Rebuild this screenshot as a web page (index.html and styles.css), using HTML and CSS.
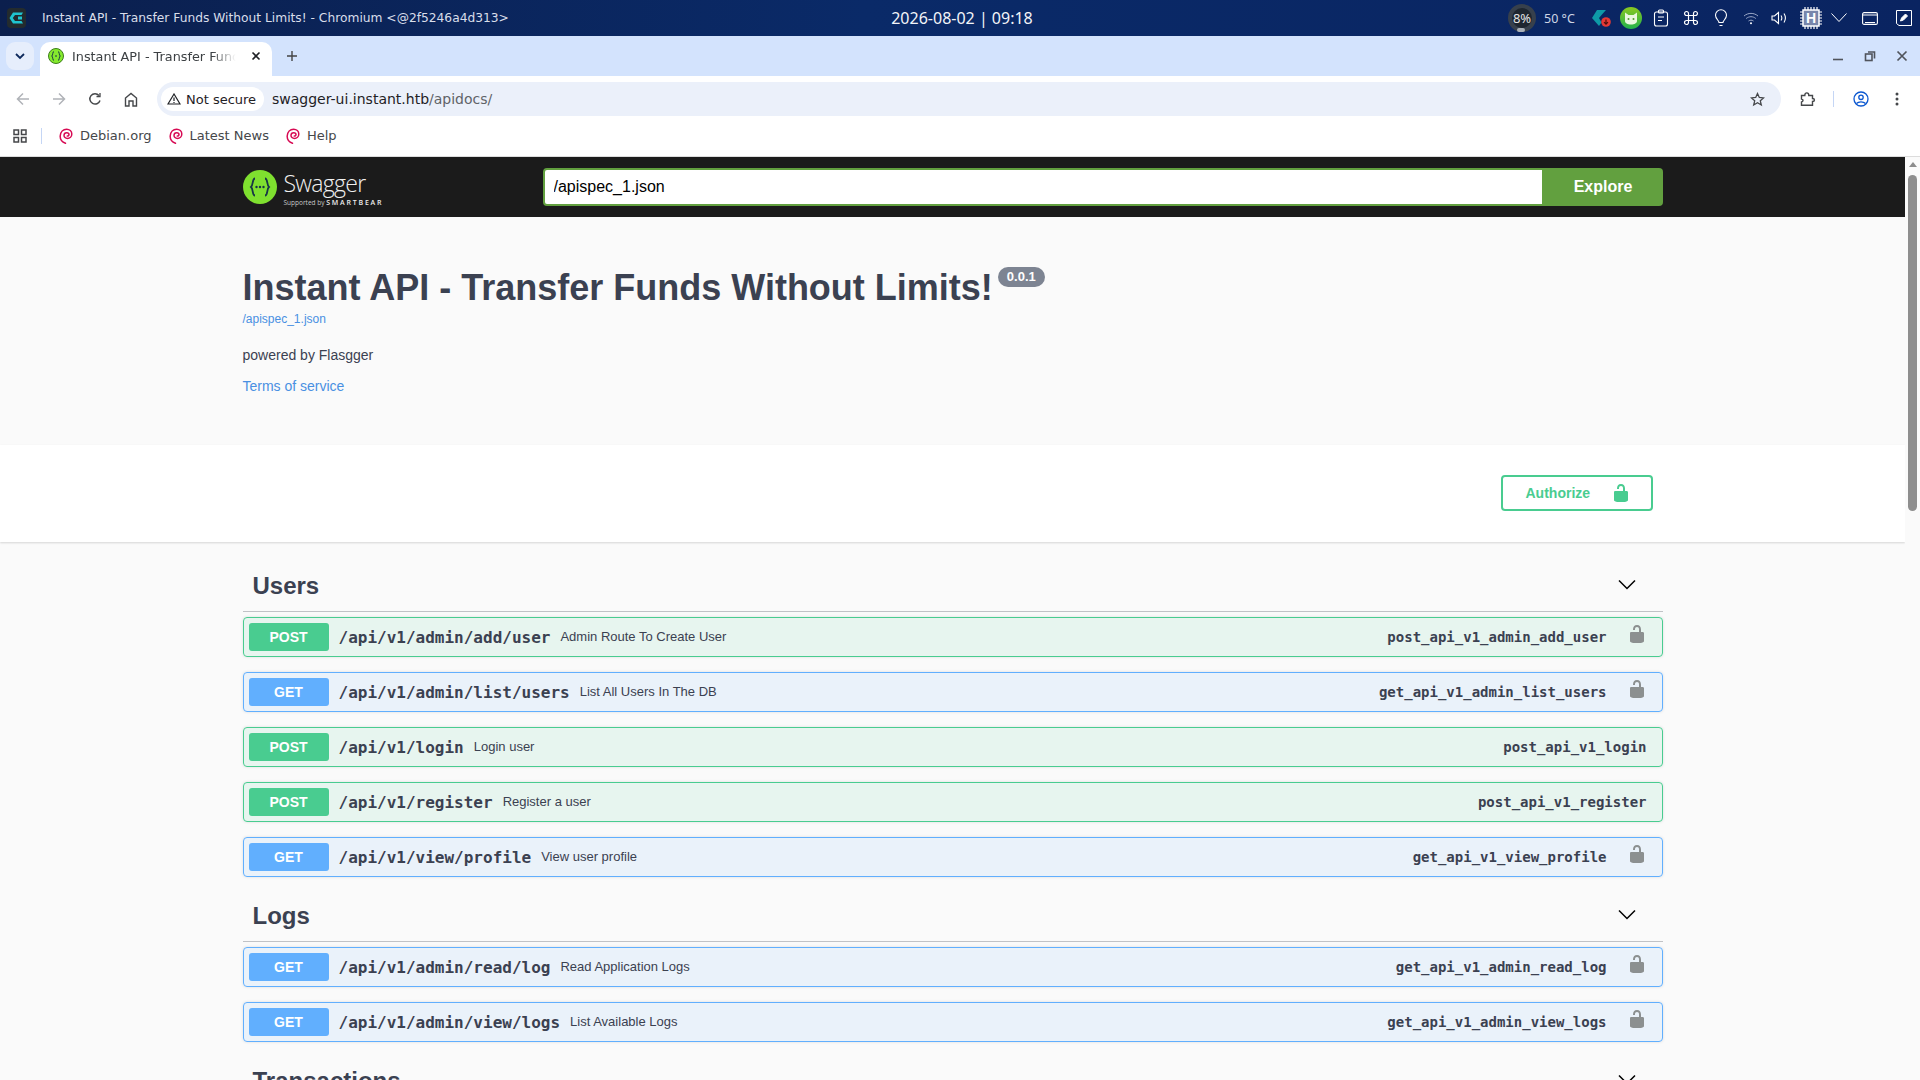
FILE: index.html
```html
<!DOCTYPE html>
<html lang="en">
<head>
    <meta charset="UTF-8">
    <title>Instant API - Transfer Funds Without Limits!</title>
    <link rel="stylesheet" href="styles.css">
</head>
<body>
    <svg class="defs" width="0" height="0">
        <symbol id="lock" viewBox="0 0 20 20"><path d="M15.8 8H14V5.6C14 2.703 12.665 1 10 1 7.334 1 6 2.703 6 5.6V6h2v-.801C8 3.754 8.797 3 10 3c1.203 0 2 .754 2 2.199V8H4c-.553 0-1 .646-1 1.199V17c0 .549.428 1.139.951 1.307l1.197.387C5.672 18.861 6.55 19 7.1 19h5.8c.549 0 1.428-.139 1.951-.307l1.196-.387c.524-.167.953-.757.953-1.306V9.199C17 8.646 16.352 8 15.8 8z"/></symbol>
        <symbol id="swirl" viewBox="0 0 14 16"><path d="M6.500 15.300C3 14 1 11.500 1.200 8 1.500 4 4.200 1.200 7.600 1.200c3 0 5.200 2 5.200 4.700 0 2.700-2.100 4.500-4.400 4.500-1.900 0-3.400-1.300-3.400-3 0-1.600 1.200-2.700 2.700-2.700 1.300 0 2.300.8 2.300 1.900 0 1-.8 1.600-1.700 1.500" fill="none" stroke="#d70a53" stroke-width="1.500" stroke-linecap="round"/></symbol>
        <symbol id="chevron" viewBox="0 0 20 20"><path d="M2 5.500l8 8 8-8" fill="none" stroke="#000" stroke-width="1.500"/></symbol>
    </svg>

    <div class="desktop">
        <!-- system panel -->
        <div class="panel">
            <div class="panel-left">
                <svg class="app-logo" width="19" height="20" viewBox="0 0 19 20">
                    <rect width="19" height="20" rx="4" fill="#232b2e"/>
                    <path d="M6 4.500h10l-1.500 2.500H8L5.800 10 8 13h6.500l1.500 2.500H6L2.500 10z" fill="#1fc4cf"/>
                    <rect x="11" y="8.500" width="4" height="3" fill="#1fc4cf"/>
                </svg>
                <span class="panel-title">Instant API - Transfer Funds Without Limits! - Chromium &lt;@2f5246a4d313&gt;</span>
            </div>
            <div class="panel-clock">2026-08-02 | 09:18</div>
            <div class="tray">
                <span class="cpu-ring">8%</span>
                <span class="temp">50 °C</span>
                <svg class="t-down" width="20" height="20" viewBox="0 0 20 20">
                    <path d="M6 2h9l-4.500 5L8 10l2.500 4.500L8 18 1 10z" fill="#0e9aa7"/>
                    <circle cx="15" cy="14" r="4.800" fill="#e53935"/>
                    <path d="M15 11.500v4.500M13 14.200l2 2 2-2" stroke="#4a0d0d" stroke-width="1.200" fill="none"/>
                </svg>
                <svg class="t-cat" width="22" height="22" viewBox="0 0 22 22">
                    <defs><linearGradient id="catfill" x1="0" y1="0" x2="0" y2="1"><stop offset="0" stop-color="#8bc820"/><stop offset="1" stop-color="#22b24c"/></linearGradient></defs>
                    <circle cx="11" cy="11" r="11" fill="url(#catfill)"/>
                    <path d="M5 5.500l3.500 2.500h5L17 5.500v8.500c0 2-2.500 3.500-6 3.500S5 16 5 14z" fill="#eaf7df"/>
                    <circle cx="8.500" cy="12" r="1" fill="#4f9a2a"/><circle cx="13.500" cy="12" r="1" fill="#4f9a2a"/>
                </svg>
                <svg class="t-clip" width="16" height="18" viewBox="0 0 16 18" fill="none" stroke="#fff" stroke-width="1.100">
                    <rect x="1.500" y="3" width="13" height="14" rx="2"/><rect x="5.500" y="1" width="5" height="3" rx="1"/><path d="M5 8h6M5 11.500h4"/>
                </svg>
                <svg class="t-cmd" width="16" height="16" viewBox="0 0 16 16" fill="none" stroke="#fff" stroke-width="1.200">
                    <path d="M5.500 5.500h5v5h-5zM5.500 5.500H3.700a2 2 0 1 1 1.800-1.800zM10.500 5.500V3.700a2 2 0 1 1 1.800 1.800zM10.500 10.500h1.800a2 2 0 1 1-1.800 1.800zM5.500 10.500v1.800a2 2 0 1 1-1.800-1.800z"/>
                </svg>
                <svg class="t-bulb" width="14" height="18" viewBox="0 0 14 18" fill="none" stroke="#fff" stroke-width="1.100">
                    <path d="M5 13.500c0-2-3.500-3.500-3.500-7.200a5.500 5.500 0 0 1 11 0c0 3.700-3.500 5.200-3.500 7.200zM5.500 16.500h3"/>
                </svg>
                <svg class="t-wifi" width="16" height="14" viewBox="0 0 16 14" fill="none" stroke="#9aa8c8" stroke-width="1">
                    <path d="M1 5c4-3.500 10-3.500 14 0M3.200 7.500c3-2.400 6.600-2.400 9.600 0M5.500 10c1.500-1.100 3.500-1.100 5 0"/><circle cx="8" cy="12.300" r="1" fill="#fff" stroke="none"/>
                </svg>
                <svg class="t-vol" width="16" height="14" viewBox="0 0 16 14" fill="none" stroke="#fff" stroke-width="1.100">
                    <path d="M1 5v4h2.500L7.500 12.500v-11L3.500 5zM10 4.500c1 1.500 1 3.500 0 5M13 2.500c1.700 2.700 1.700 6.300 0 9"/>
                </svg>
                <svg class="t-chip" width="22" height="22" viewBox="0 0 22 22">
                    <path d="M5 0v22M8 0v22M11 0v22M14 0v22M17 0v22M0 5h22M0 8h22M0 11h22M0 14h22M0 17h22" stroke="#fff" stroke-width="1.200"/>
                    <rect x="3" y="3" width="16" height="16" fill="#7886ab" stroke="#fff" stroke-width="1.500"/>
                    <text x="11" y="16" class="cpu-letter">H</text>
                </svg>
                <svg class="t-chev" width="16" height="10" viewBox="0 0 16 10" fill="none" stroke="#fff" stroke-width="1"><path d="M.500 .500L8 8.500 15.500 .500"/></svg>
                <svg class="t-win" width="16" height="13" viewBox="0 0 16 13" fill="none" stroke="#fff" stroke-width="1.100"><rect x=".600" y=".600" width="14.800" height="11.800" rx="1.500"/><path d="M.600 3h14.800M3 10.500h10"/></svg>
                <svg class="t-note" width="16" height="16" viewBox="0 0 16 16" fill="none" stroke="#fff" stroke-width="1"><path d="M.500 .500h15v15H3l-2.500-2z"/><path d="M4.500 11l1-3 4-4 2 2-4 4z" fill="#fff"/></svg>
            </div>
        </div>

        <!-- browser chrome -->
        <div class="tabstrip">
            <div class="tab-search">
                <svg width="10" height="7" viewBox="0 0 10 7" fill="none" stroke="#0e2a5c" stroke-width="1.800"><path d="M1 1l4 4 4-4"/></svg>
            </div>
            <div class="tab">
                <span class="favicon"><svg width="16" height="16" viewBox="0 0 16 16"><circle cx="8" cy="8" r="7.500" fill="#85ea2d" stroke="#3c7d1b"/><path d="M6 3.500C4.500 3.500 5 7 3.800 8 5 9 4.500 12.500 6 12.500M10 3.500c1.500 0 1 3.500 2.200 4.500-1.200 1-.7 4.500-2.200 4.500M7 8h2" fill="none" stroke="#173647"/></svg></span>
                <span class="tab-title">Instant API - Transfer Funds Without Limits!</span>
                <svg class="tab-close" width="10" height="10" viewBox="0 0 10 10" stroke="#1f2125" stroke-width="1.600"><path d="M1.500 1.500l7 7M8.500 1.500l-7 7"/></svg>
            </div>
            <svg class="tab-new" width="12" height="12" viewBox="0 0 12 12" stroke="#444" stroke-width="1.400"><path d="M6 1v10M1 6h10"/></svg>
            <div class="window-controls">
                <svg width="12" height="12" viewBox="0 0 12 12" stroke="#50545c" stroke-width="1.600"><path d="M1 9.500h10"/></svg>
                <svg width="12" height="12" viewBox="0 0 12 12" fill="none" stroke="#50545c" stroke-width="1.600"><rect x="1.500" y="4" width="6.500" height="6.500"/><path d="M4 2h6.500v6.500"/></svg>
                <svg width="12" height="12" viewBox="0 0 12 12" stroke="#50545c" stroke-width="1.700"><path d="M1.500 1.500l9 9M10.500 1.500l-9 9"/></svg>
            </div>
        </div>

        <div class="toolbar">
            <svg class="nav-icon" width="14" height="14" viewBox="0 0 14 14" fill="none" stroke="#b0b3b8" stroke-width="1.500"><path d="M13 7H2M7 1.500L1.500 7 7 12.500"/></svg>
            <svg class="nav-icon" width="14" height="14" viewBox="0 0 14 14" fill="none" stroke="#b0b3b8" stroke-width="1.500"><path d="M1 7h11M7 1.500L12.500 7 7 12.500"/></svg>
            <svg class="nav-icon" width="14" height="14" viewBox="0 0 14 14" fill="none" stroke="#45474a" stroke-width="1.500"><path d="M12 8.500A5.200 5.200 0 1 1 11 3.500"/><path d="M12 1v3.500H8.500" stroke-width="1.300"/></svg>
            <svg class="nav-icon" width="14" height="15" viewBox="0 0 14 15" fill="none" stroke="#45474a" stroke-width="1.400"><path d="M1.500 14V6L7 1.500 12.500 6v8H9V9H5v5z"/></svg>
            <div class="omnibox">
                <div class="chip">
                    <svg width="14" height="12" viewBox="0 0 14 12" fill="none" stroke="#1f2125" stroke-width="1.200"><path d="M7 1L1 11h12zM7 4.500v3.500M7 9v1"/></svg>
                    <span>Not secure</span>
                </div>
                <div class="url">swagger-ui.instant.htb<span class="url-path">/apidocs/</span></div>
                <svg class="star" width="15" height="15" viewBox="0 0 15 15" fill="none" stroke="#45474a" stroke-width="1.300"><path d="M7.500 1.500l1.800 4 4.300.4-3.300 2.900 1 4.200-3.800-2.300-3.800 2.300 1-4.200L1.400 5.900l4.300-.4z"/></svg>
            </div>
            <svg class="ext" width="16" height="16" viewBox="0 0 16 16" fill="none" stroke="#45474a" stroke-width="1.400"><path d="M1.500 4.500h3.300C4.800 1 8.800 1 8.800 4.500h3.700v3c2.600 0 2.600 3 0 3v3.800h-11v-3.300c2-.6 2-2.400 0-3z"/></svg>
            <span class="tool-sep"></span>
            <svg class="profile" width="16" height="16" viewBox="0 0 16 16" fill="none" stroke="#0b57d0" stroke-width="1.300"><circle cx="8" cy="8" r="7"/><circle cx="8" cy="6.300" r="2.200"/><path d="M3.500 12.500c2-2.300 7-2.300 9 0"/></svg>
            <svg class="menu" width="4" height="14" viewBox="0 0 4 14" fill="#45474a"><circle cx="2" cy="2" r="1.500"/><circle cx="2" cy="7" r="1.500"/><circle cx="2" cy="12" r="1.500"/></svg>
        </div>

        <div class="bookmarks">
            <svg width="14" height="14" viewBox="0 0 14 14" fill="none" stroke="#45474a" stroke-width="1.500"><rect x="1" y="1" width="4.500" height="4.500"/><rect x="8.500" y="1" width="4.500" height="4.500"/><rect x="1" y="8.500" width="4.500" height="4.500"/><rect x="8.500" y="8.500" width="4.500" height="4.500"/></svg>
            <span class="bm-sep"></span>
            <a class="bm"><svg width="14" height="16"><use href="#swirl"/></svg>Debian.org</a>
            <a class="bm"><svg width="14" height="16"><use href="#swirl"/></svg>Latest News</a>
            <a class="bm"><svg width="14" height="16"><use href="#swirl"/></svg>Help</a>
        </div>

        <!-- page -->
        <div class="page">
            <div class="main">
                <div class="topbar">
                    <div class="wrap topbar-inner">
                        <div class="brand">
                            <svg width="34" height="34" viewBox="0 0 34 34">
                                <circle cx="17" cy="17" r="17" fill="#7fe02f"/>
                                <path d="M12 8.500c-3 0-1.500 6.500-4 8.500 2.500 2 1 8.500 4 8.500M22 8.500c3 0 1.500 6.500 4 8.500-2.500 2-1 8.500-4 8.500" fill="none" stroke="#173647" stroke-width="1.800"/>
                                <circle cx="13.500" cy="17" r="1.200" fill="#173647"/><circle cx="17" cy="17" r="1.200" fill="#173647"/><circle cx="20.500" cy="17" r="1.200" fill="#173647"/>
                            </svg>
                            <div class="brand-text">
                                <span class="brand-name">Swagger</span>
                                <span class="brand-sub">Supported by <b>SMARTBEAR</b></span>
                            </div>
                        </div>
                        <div class="explore">
                            <input class="explore-input" type="text" value="/apispec_1.json">
                            <button class="explore-btn">Explore</button>
                        </div>
                    </div>
                </div>

                <div class="info">
                    <div class="wrap">
                        <div class="title-row">
                            <h2 class="title">Instant API - Transfer Funds Without Limits!</h2>
                            <span class="version">0.0.1</span>
                        </div>
                        <a class="spec-link">/apispec_1.json</a>
                        <p class="desc">powered by Flasgger</p>
                        <a class="terms">Terms of service</a>
                    </div>
                </div>

                <div class="schemes">
                    <div class="wrap schemes-inner">
                        <button class="authorize">Authorize <svg width="20" height="20"><use href="#lock"/></svg></button>
                    </div>
                </div>

                <div class="wrap ops">
                    <div class="tag"><h3>Users</h3><svg width="20" height="20"><use href="#chevron"/></svg></div>
                    <div class="op post">
                        <span class="method">POST</span><span class="path">/api/v1/admin/add/user</span><span class="summary">Admin Route To Create User</span>
                        <span class="opid">post_api_v1_admin_add_user</span><svg class="op-lock" width="20" height="20"><use href="#lock"/></svg>
                    </div>
                    <div class="op get">
                        <span class="method">GET</span><span class="path">/api/v1/admin/list/users</span><span class="summary">List All Users In The DB</span>
                        <span class="opid">get_api_v1_admin_list_users</span><svg class="op-lock" width="20" height="20"><use href="#lock"/></svg>
                    </div>
                    <div class="op post">
                        <span class="method">POST</span><span class="path">/api/v1/login</span><span class="summary">Login user</span>
                        <span class="opid no-lock">post_api_v1_login</span>
                    </div>
                    <div class="op post">
                        <span class="method">POST</span><span class="path">/api/v1/register</span><span class="summary">Register a user</span>
                        <span class="opid no-lock">post_api_v1_register</span>
                    </div>
                    <div class="op get">
                        <span class="method">GET</span><span class="path">/api/v1/view/profile</span><span class="summary">View user profile</span>
                        <span class="opid">get_api_v1_view_profile</span><svg class="op-lock" width="20" height="20"><use href="#lock"/></svg>
                    </div>

                    <div class="tag"><h3>Logs</h3><svg width="20" height="20"><use href="#chevron"/></svg></div>
                    <div class="op get">
                        <span class="method">GET</span><span class="path">/api/v1/admin/read/log</span><span class="summary">Read Application Logs</span>
                        <span class="opid">get_api_v1_admin_read_log</span><svg class="op-lock" width="20" height="20"><use href="#lock"/></svg>
                    </div>
                    <div class="op get">
                        <span class="method">GET</span><span class="path">/api/v1/admin/view/logs</span><span class="summary">List Available Logs</span>
                        <span class="opid">get_api_v1_admin_view_logs</span><svg class="op-lock" width="20" height="20"><use href="#lock"/></svg>
                    </div>

                    <div class="tag"><h3>Transactions</h3><svg width="20" height="20"><use href="#chevron"/></svg></div>
                </div>
            </div>
            <div class="scrollbar">
                <span class="scroll-up"></span>
                <span class="scroll-thumb"></span>
            </div>
        </div>
    </div>
</body>
</html>
```

FILE: styles.css
```css
* {
    box-sizing: border-box;
}

html, body {
    margin: 0;
    padding: 0;
    overflow: hidden;
}

body {
    font-family: "Liberation Sans", Arial, sans-serif;
    color: #3b4151;
}

.defs {
    display: block;
    height: 0;
}

.desktop {
    width: 1920px;
    height: 1080px;
    display: flex;
    flex-direction: column;
    overflow: hidden;
}

/* system panel */
.panel {
    height: 36px;
    flex: none;
    display: grid;
    grid-template-columns: 1fr auto 1fr;
    align-items: center;
    background: linear-gradient(90deg, #0b1f4d 0%, #0a2a68 45%, #0a2461 100%);
    color: #e6eaf3;
}

.panel-left {
    display: flex;
    align-items: center;
    padding-left: 7px;
}

.panel-title {
    margin-left: 16px;
    font-family: "DejaVu Sans", sans-serif;
    font-size: 12.25px;
    white-space: nowrap;
    color: #d9deea;
}

.panel-clock {
    font-family: "Noto Sans", sans-serif;
    font-size: 16px;
    color: #f2f4f8;
    transform: translateX(2px);
}

.tray {
    display: flex;
    align-items: center;
    justify-content: flex-end;
    padding-right: 8px;
}

.cpu-ring {
    position: relative;
    width: 28px;
    height: 28px;
    border-radius: 50%;
    border: 4px solid #37404c;
    background: #1e2630;
    display: flex;
    align-items: center;
    justify-content: center;
    font-family: "Noto Sans", sans-serif;
    font-size: 13px;
    white-space: nowrap;
    color: #e4e4e4;
}

.cpu-ring::after {
    content: "";
    position: absolute;
    left: 5px;
    bottom: -4px;
    width: 8px;
    height: 4px;
    border-radius: 2px;
    background: #a9b0b8;
}

.temp {
    margin-left: 8px;
    font-family: "Noto Sans", sans-serif;
    font-size: 12.5px;
    color: #cfd6e6;
    width: 46px;
}

.t-down { margin-left: 1px; }
.t-cat { margin-left: 9px; }
.t-clip { margin-left: 11px; }
.t-cmd { margin-left: 14px; }
.t-bulb { margin-left: 15px; }
.t-wifi { margin-left: 15px; }
.t-vol { margin-left: 12px; }
.t-chip { margin-left: 13px; }
.t-chev { margin-left: 9px; }
.t-win { margin-left: 15px; }
.t-note { margin-left: 18px; }

.cpu-letter {
    fill: #fff;
    font-family: "Liberation Sans", sans-serif;
    font-size: 14px;
    font-weight: bold;
    text-anchor: middle;
}

/* tabs */
.tabstrip {
    height: 40px;
    flex: none;
    display: flex;
    align-items: flex-end;
    background: #d3e3fd;
    padding-left: 6px;
    font-family: "DejaVu Sans", sans-serif;
}

.tab-search {
    width: 28px;
    height: 28px;
    margin-bottom: 6px;
    border-radius: 9px;
    background: #e6eefc;
    display: flex;
    align-items: center;
    justify-content: center;
}

.tab {
    width: 232px;
    height: 34px;
    margin-left: 6px;
    padding: 0 11px 6px 8px;
    background: #fff;
    border-radius: 10px 10px 0 0;
    display: flex;
    align-items: center;
    font-size: 12.8px;
    color: #3c4043;
}

.favicon {
    display: flex;
    margin-right: 8px;
}

.tab-title {
    flex: 1;
    overflow: hidden;
    white-space: nowrap;
    -webkit-mask-image: linear-gradient(90deg, #000 84%, transparent 98%);
    mask-image: linear-gradient(90deg, #000 84%, transparent 98%);
}

.tab-close {
    margin-left: 12px;
}

.tab-new {
    margin: 0 0 14px 14px;
}

.window-controls {
    margin-left: auto;
    margin-bottom: 14px;
    padding-right: 12px;
    display: flex;
    gap: 20px;
}

/* toolbar */
.toolbar {
    height: 46px;
    flex: none;
    display: flex;
    align-items: flex-start;
    padding: 6px 0 0 16px;
    background: #fff;
    border-radius: 10px 10px 0 0;
    font-family: "DejaVu Sans", sans-serif;
}

.nav-icon {
    margin: 10px 22px 0 0;
}

.omnibox {
    width: 1624px;
    height: 34px;
    margin-left: -3px;
    padding: 0 16px 0 4px;
    border-radius: 17px;
    background: #ebf0fa;
    display: flex;
    align-items: center;
}

.chip {
    width: 103px;
    height: 24px;
    border-radius: 12px;
    background: #fff;
    display: flex;
    align-items: center;
    gap: 5px;
    padding-left: 6px;
    font-size: 13px;
    white-space: nowrap;
    color: #1f2125;
}

.url {
    margin-left: 8px;
    font-size: 14px;
    color: #1f2125;
}

.url-path {
    color: #5f6368;
}

.star {
    margin-left: auto;
}

.ext {
    margin: 9px 0 0 19px;
}

.tool-sep {
    width: 1px;
    height: 16px;
    margin: 9px 0 0 17px;
    background: #c5d6f5;
}

.profile {
    margin: 9px 0 0 19px;
}

.menu {
    margin: 10px 0 0 26px;
}

/* bookmarks */
.bookmarks {
    height: 35px;
    flex: none;
    padding: 0 0 7px 13px;
    display: flex;
    align-items: center;
    background: #fff;
    border-bottom: 1px solid #dcdcdc;
    font-family: "DejaVu Sans", sans-serif;
    font-size: 13px;
    color: #45474a;
}

.bm-sep {
    width: 1px;
    height: 16px;
    margin: 0 17px 0 14px;
    background: #c5d6f5;
}

.bm {
    display: flex;
    align-items: center;
    gap: 7px;
    margin-right: 17px;
    white-space: nowrap;
}

/* page */
.page {
    flex: 1;
    min-height: 0;
    display: flex;
    background: #fafafa;
}

.main {
    flex: 1;
    min-width: 0;
    overflow: hidden;
}

.wrap {
    width: 1420px;
    margin: 0 auto;
}

.scrollbar {
    width: 15px;
    flex: none;
    padding-top: 5px;
    display: flex;
    flex-direction: column;
    align-items: center;
    background: #fafafa;
}

.scroll-up {
    width: 0;
    height: 0;
    border-left: 4.5px solid transparent;
    border-right: 4.5px solid transparent;
    border-bottom: 5px solid #8c8c8c;
}

.scroll-thumb {
    width: 9px;
    height: 336px;
    margin-top: 8px;
    border-radius: 5px;
    background: #8e8e8e;
}

.topbar {
    height: 60px;
    background: #1b1b1b;
}

.topbar-inner {
    height: 60px;
    display: flex;
    align-items: center;
    justify-content: space-between;
}

.brand {
    display: flex;
    align-items: center;
    gap: 7px;
    color: #f0f0f0;
}

.brand-text {
    display: flex;
    flex-direction: column;
    padding-top: 3px;
}

.brand-name {
    font-family: "Open Sans", sans-serif;
    font-size: 23px;
    font-weight: 300;
    line-height: 27px;
    letter-spacing: -.7px;
}

.brand-sub {
    margin-top: 1px;
    font-family: "Open Sans", sans-serif;
    font-size: 6.5px;
    line-height: 10px;
    white-space: nowrap;
    color: #c8c8c8;
}

.brand-sub b {
    font-size: 7px;
    font-weight: 600;
    letter-spacing: 1.800px;
    color: #ededed;
}

.explore {
    width: 1120px;
    height: 38px;
    display: flex;
}

.explore-input {
    flex: 1;
    min-width: 0;
    height: 38px;
    padding: 0 9px;
    border: 2px solid #62a03f;
    border-radius: 4px 0 0 4px;
    background: #fff;
    font-family: "Liberation Sans", sans-serif;
    font-size: 16px;
    color: #000;
}

.explore-btn {
    width: 119px;
    height: 38px;
    border: none;
    border-radius: 0 4px 4px 0;
    background: #62a03f;
    color: #fff;
    font-family: "Liberation Sans", sans-serif;
    font-size: 16px;
    font-weight: bold;
}

/* api info */
.info {
    height: 228px;
    padding-top: 48px;
    background: #fafafa;
}

.title-row {
    display: flex;
    align-items: flex-start;
}

.title {
    margin: 0;
    padding-top: 1px;
    font-size: 36px;
    line-height: 44px;
    font-weight: bold;
    color: #3b4151;
}

.version {
    margin: 2px 0 0 5px;
    padding: 0 9px;
    height: 20px;
    line-height: 20px;
    border-radius: 10px;
    background: #7d8492;
    color: #fff;
    font-size: 13px;
    font-weight: bold;
}

.spec-link {
    display: block;
    margin-top: 1px;
    font-size: 12px;
    line-height: 16px;
    color: #4990e2;
}

.desc {
    margin: 19px 0 0;
    font-size: 14px;
    line-height: 18px;
}

.terms {
    display: block;
    margin-top: 13px;
    font-size: 14px;
    line-height: 18px;
    color: #4990e2;
}

/* authorize */
.schemes {
    height: 97px;
    padding-top: 30px;
    background: #fff;
    box-shadow: 0 1px 2px 0 rgba(0, 0, 0, .15);
}

.schemes-inner {
    display: flex;
    justify-content: flex-end;
    padding-right: 10px;
}

.authorize {
    width: 152px;
    height: 36px;
    display: flex;
    align-items: center;
    justify-content: space-between;
    padding: 0 20px 0 23px;
    border: 2px solid #49cc90;
    border-radius: 4px;
    background: transparent;
    color: #49cc90;
    font-family: "Liberation Sans", sans-serif;
    font-size: 14px;
    font-weight: bold;
}

.authorize svg {
    fill: #49cc90;
}

/* operations */
.ops {
    padding-top: 20px;
}

.tag {
    height: 50px;
    margin-bottom: 5px;
    padding: 0 26px 0 10px;
    display: flex;
    align-items: center;
    justify-content: space-between;
    border-bottom: 1px solid rgba(59, 65, 81, .3);
}

.tag h3 {
    margin: 0 0 2px;
    font-size: 24px;
    font-weight: bold;
    color: #3b4151;
}

.tag svg {
    margin-bottom: 4px;
}

.op {
    height: 40px;
    margin-bottom: 15px;
    padding: 0 5px;
    display: flex;
    align-items: center;
    border: 1px solid;
    border-radius: 4px;
    box-shadow: 0 0 3px rgba(0, 0, 0, .12);
}

.op.post {
    border-color: #49cc90;
    background: rgba(73, 204, 144, .1);
}

.op.get {
    border-color: #61affe;
    background: rgba(97, 175, 254, .1);
}

.method {
    width: 80px;
    height: 28px;
    line-height: 28px;
    flex: none;
    border-radius: 3px;
    text-align: center;
    color: #fff;
    font-size: 14px;
    font-weight: bold;
}

.post .method {
    background: #49cc90;
}

.get .method {
    background: #61affe;
}

.path {
    margin-left: 10px;
    font-family: "DejaVu Sans Mono", monospace;
    font-size: 16px;
    font-weight: bold;
}

.summary {
    margin: 0 0 2px 10px;
    font-size: 13px;
}

.opid {
    margin-left: auto;
    font-family: "DejaVu Sans Mono", monospace;
    font-size: 14px;
    font-weight: bold;
}

.opid.no-lock {
    margin-right: 10px;
}

.op-lock {
    margin: -6px 10px 0 20px;
    fill: #8c9090;
}
```
